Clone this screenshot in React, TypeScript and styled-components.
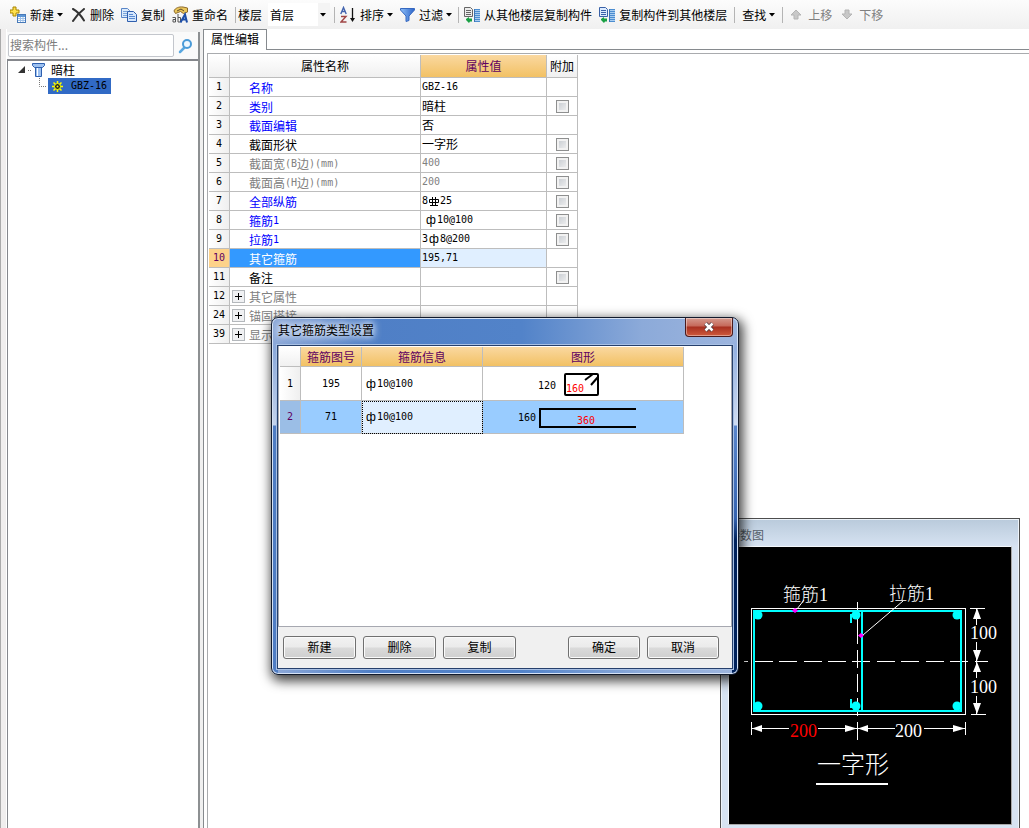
import React from "react";
import styled, { createGlobalStyle, css } from "styled-components";

const Global = createGlobalStyle`
  *, *::before, *::after { box-sizing: border-box; }
  html, body, #root { height: 100%; margin: 0; }
  body {
    font: 12px/16px "Noto Sans CJK SC", sans-serif;
    color: #000;
    background: #fff;
    overflow: hidden;
  }
  button, input, select { font: inherit; color: inherit; margin: 0; }
`;

const Latin = styled.span`
  font: 10px/10px "DejaVu Sans Mono", monospace;
`;

/* Chinese text with half-width Latin characters and digits */
function Mixed({ text }: { text: string }) {
  return (
    <>
      {text.split(/([\x20-\x7e]+)/).map((part, i) =>
        i % 2 ? <Latin key={i}>{part}</Latin> : part
      )}
    </>
  );
}

const Desktop = styled.div`
  position: relative;
  display: flex;
  flex-direction: column;
  height: 100vh;
  overflow: hidden;
`;

/* ---------- toolbar ---------- */

const Toolbar = styled.header`
  display: flex;
  align-items: center;
  flex: none;
  height: 29px;
  background: linear-gradient(#fcfcfc, #f0f0f0);
  white-space: nowrap;
`;

const Group = styled.div<{ $pad: number; $end: number; $first?: boolean }>`
  display: flex;
  align-items: center;
  gap: 7px;
  height: 16px;
  padding-left: ${(p) => p.$pad}px;
  margin-right: ${(p) => p.$end}px;
  border-left: ${(p) => (p.$first ? "0" : "1px solid #b4b4b4")};
`;

const ToolButton = styled.button`
  display: flex;
  align-items: center;
  gap: 4px;
  padding: 0;
  border: 0;
  background: none;
  line-height: 16px;
  &:disabled { color: #808080; }
  svg { flex: none; }
`;

const MenuLabel = styled.span`
  display: flex;
  align-items: center;
  gap: 3px;
`;

const FloorLabel = styled.label`
  display: flex;
  align-items: center;
  gap: 6px;
`;

const SelectBox = styled.span`
  display: flex;
  align-items: center;
  width: 62px;
  height: 23px;
  background: linear-gradient(90deg, #fff 50px, #f4f4f4 50px);
  svg { flex: none; margin-right: 4px; }
`;

const FloorSelect = styled.select`
  appearance: none;
  flex: 1;
  min-width: 0;
  padding: 0 2px;
  border: 0;
  background: transparent;
  line-height: 16px;
`;

const Caret = () => (
  <svg width="6" height="4" viewBox="0 0 6 4"><path d="M0 0h6L3 3.5z" fill="#000" /></svg>
);

const NewIcon = () => (
  <svg width="16" height="18" viewBox="0 0 16 18">
    <path d="M3 1h3v3h3v3H6v3H3V7H0V4h3z" fill="#ffe14d" stroke="#a88400" />
    <rect x="7.5" y="8.500" width="8" height="8" fill="#fff" stroke="#4779b8" />
    <path d="M8 9h7v2H8z" fill="#5e97d6" />
    <path d="M8 12.500h7M8 14.500h7M10.500 11v5M13 11v5" stroke="#9dc0e8" />
  </svg>
);
const DeleteIcon = () => (
  <svg width="16" height="14" viewBox="-2 0 16 14">
    <path d="M1 1C5 3 9 7.500 12 12.500M12 1C8 4 4 8 1 13" stroke="#333" strokeWidth="2" fill="none" strokeLinecap="round" />
  </svg>
);
const CopyIcon = () => (
  <svg width="16" height="16" viewBox="0 0 16 16">
    <path d="M.5 1.500h6l2 2v7h-8z" fill="#dcebfb" stroke="#5a86c8" />
    <path d="M2 4.500h4M2 6.500h4M2 8.500h4" stroke="#7ba5dc" />
    <path d="M6.500 4.500h6l3 3v7h-9z" fill="#d4e6fc" stroke="#2f5fae" />
    <path d="M8 7.500h4M8 9.500h6M8 11.500h6" stroke="#5a8ad0" />
  </svg>
);
const RenameIcon = () => (
  <svg width="16" height="18" viewBox="0 0 16 18">
    <path d="M2 5c1-3 5-4.500 9-4l4.500 1v4l-4 1.500-3-2-5 2z" fill="#eac65a" stroke="#8d6a2a" />
    <path d="M5 5l4-2 3 2" stroke="#5e4a2a" fill="none" />
    <path d="M.5 11.500h3v4.500H1v-2.500h2.500M6 8v8h2.500v-4.500H6" stroke="#555" fill="none" />
    <path d="M8.500 16.500L13 8.500l2 8M10 13.500h4" stroke="#1e4fa8" strokeWidth="2" fill="none" />
  </svg>
);
const SortIcon = () => (
  <svg width="16" height="18" viewBox="0 0 16 18">
    <path d="M.8 8L3.500 1.500 6.200 8M2 5.500h3" stroke="#4263ae" strokeWidth="1.400" fill="none" />
    <path d="M1 10.500h5L1 16h5.500" stroke="#a04545" strokeWidth="1.400" fill="none" />
    <path d="M12.500 2v12" stroke="#111" strokeWidth="1.300" />
    <path d="M10 12h5l-2.500 4z" fill="#111" />
  </svg>
);
const FilterIcon = () => (
  <svg width="15" height="14" viewBox="0 0 15 14">
    <defs>
      <linearGradient id="funnel"><stop stopColor="#8fc0f8" /><stop offset="1" stopColor="#2a62c8" /></linearGradient>
    </defs>
    <path d="M.5.5h14v1.500L9 8v4.500l-3 1V8L.5 2z" fill="url(#funnel)" stroke="#3668c0" />
  </svg>
);
const CopyFloorIcon = ({ page, edge }: { page: string; edge: string }) => (
  <svg width="16" height="18" viewBox="0 0 16 18">
    <path d="M.5 1.500h6l2 2v7h-8z" fill={page} stroke={edge} />
    <path d="M2 4.500h5M2 6.500h5M2 8.500h5" stroke={edge} />
    <path d="M2 13l3-2v1.500h3v3H6L5 17l-3-3z" fill="#18a043" />
    <path d="M10.500 3v13" stroke="#3c74b4" />
    <path d="M11 3.500h5M11 5.500h5M11 7.500h5M11 9.500h5M11 11.500h5M11 13.500h5M11 15.500h5" stroke="#4c8dd0" />
    <path d="M11 4.500h5M11 6.500h5M11 8.500h5M11 10.500h5M11 12.500h5M11 14.500h5" stroke="#a9cdf0" />
  </svg>
);
const MoveIcon = ({ down }: { down?: boolean }) => (
  <svg width="16" height="12" viewBox="0 0 16 12">
    <path d={down ? "M6 1h4v4h3L8 10 3 5h3z" : "M6 10h4V6h3L8 1 3 6h3z"} fill="#c8c8c8" stroke="#b4b4b4" />
  </svg>
);

/* ---------- main body ---------- */

const Body = styled.div`
  display: flex;
  flex: 1;
  min-height: 0;
  background: #f0f0f0;
`;

const Gutter = styled.div`
  width: 7px;
  border-left: 1px solid #aaa;
  border-right: 1px solid #fff;
  background: #f0eeee;
`;

const LeftPane = styled.aside`
  display: flex;
  flex-direction: column;
  width: 193px;
  margin-top: 3px;
  border-right: 2px solid #8d9092;
`;

const SearchRow = styled.form`
  display: flex;
  align-items: center;
  gap: 4px;
  height: 27px;
  padding-left: 1px;
  background: #fafafa;
`;

const SearchInput = styled.input`
  width: 166px;
  height: 23px;
  padding: 0 1px 2px;
  border: 1px solid #c3c6cc;
  border-radius: 2px;
  outline: 0;
  background: #fff;
  &::placeholder { color: #7c7c7c; opacity: 1; }
`;

const IconButton = styled.button`
  display: flex;
  padding: 0;
  border: 0;
  background: none;
`;

const Tree = styled.ul`
  flex: 1;
  margin: 0;
  padding: 1px 0 0;
  border-top: 2px solid #85878c;
  border-left: 1px solid #85878c;
  background: #fff;
  list-style: none;
  ul { margin: 0; padding: 0; list-style: none; }
`;

const TreeRow = styled.div<{ $indent: number; $gap: number }>`
  display: flex;
  align-items: center;
  height: 16px;
  padding-left: ${(p) => p.$indent}px;
  gap: ${(p) => p.$gap}px;
`;

const Selected = styled.span`
  display: flex;
  align-items: center;
  gap: 8px;
  height: 16px;
  padding: 0 4px;
  background: #316ac5;
`;

const RightPane = styled.main`
  display: flex;
  flex-direction: column;
  flex: 1;
  min-width: 0;
  margin-left: 3px;
  background: #fff;
`;

const TabBar = styled.div`
  display: flex;
  height: 21px;
  &::after { content: ""; flex: 1; border-bottom: 1px solid #868a8e; }
`;

const Tab = styled.button`
  width: 64px;
  padding: 0 0 2px;
  border: 1px solid #868a8e;
  border-bottom: 0;
  background: #fff;
`;

const TabPanel = styled.section`
  flex: 1;
  padding: 3px 0 0 3px;
  border-left: 1px solid #868a8e;
`;

const GridFrame = styled.div`
  height: 100%;
  padding: 1px 0 0 1px;
  border: solid #a9abae;
  border-width: 1px 0 0 1px;
`;

const PropTable = styled.table`
  width: 369px;
  border-collapse: separate;
  border-spacing: 0;
  table-layout: fixed;
`;

const line = "1px solid #bdbdbd";

const HeadCell = styled.th<{ $gold?: boolean; $width?: number; $height: number }>`
  width: ${(p) => (p.$width ? `${p.$width}px` : "auto")};
  height: ${(p) => p.$height}px;
  padding: 0;
  border-right: ${line};
  border-bottom: ${line};
  font-weight: 400;
  color: ${(p) => (p.$gold ? "#600060" : "#000")};
  background: ${(p) => (p.$gold ? "linear-gradient(#fad8a0, #f2c164)" : "linear-gradient(#fff, #f0f0f0)")};
`;

const IndexCell = styled.th<{ $active?: boolean; $blue?: boolean }>`
  padding: 0;
  border-right: ${line};
  border-bottom: ${line};
  font-weight: 400;
  background: linear-gradient(90deg, #fff, #efefef);
  ${(p) => p.$active && css`color: #600060; background: #fdd28a;`}
  ${(p) => p.$blue && css`color: #600060; background: #9bbee6;`}
`;

type Tone = "link" | "plain" | "muted" | "selected";
const tones: Record<Tone, string> = { link: "#0000ff", plain: "#000", muted: "#808080", selected: "#fff" };

const NameCell = styled.td<{ $tone: Tone; $group?: boolean }>`
  height: 19px;
  padding: 2px 0 0 ${(p) => (p.$group ? 2 : 19)}px;
  border-right: ${line};
  border-bottom: ${line};
  color: ${(p) => tones[p.$tone]};
  background: ${(p) => (p.$tone === "selected" ? "#3399ff" : "#fff")};
  white-space: nowrap;
`;

const ValueCell = styled.td<{ $tone: Tone; $inset: boolean }>`
  height: 19px;
  padding: 0 0 0 ${(p) => (p.$inset ? 4 : 1)}px;
  border-right: ${line};
  border-bottom: ${line};
  color: ${(p) => (p.$tone === "muted" ? "#808080" : "#000")};
  background: ${(p) => (p.$tone === "selected" ? "#e0efff" : "#fff")};
  white-space: nowrap;
`;

const CheckCell = styled.td`
  padding: 0;
  border-right: ${line};
  border-bottom: ${line};
  text-align: center;
`;

const Check = styled.input`
  appearance: none;
  display: block;
  width: 13px;
  height: 13px;
  margin: 1px auto 0;
  border: 1px solid #8e8f8f;
  background: linear-gradient(135deg, #c3c8ce, #f4f4f4);
  box-shadow: inset 0 0 0 2px #f2f2f2;
`;

const GroupName = styled.span`
  display: flex;
  align-items: center;
  gap: 4px;
  height: 16px;
`;

const Expander = styled.button`
  display: flex;
  padding: 1px;
  border: 1px solid #b4b8bc;
  background: #f0f1f3;
  margin-top: -2px;
`;

const ValueText = styled.span`
  display: flex;
  align-items: center;
  height: 16px;
`;

/* Steel-grade mark placed before a bar diameter, one full-width character */
const Grade = styled.span`
  display: flex;
  justify-content: center;
  width: 12px;
  font: 12px/12px "Liberation Sans", sans-serif;
`;

const Ribbed = () => (
  <svg width="12" height="11" viewBox="0 0 12 11" role="img" aria-label="HRB400">
    <path d="M1.500 3.500h9v3h-9zM4.500 1v8M7.500 1v8M2 9.500h8" fill="none" stroke="#000" />
  </svg>
);

const Value = ({ text }: { text: string }) => (
  <ValueText>
    {text.split(/([ф#])/).map((part, i) =>
      part === "ф" ? <Grade key={i}>ф</Grade>
      : part === "#" ? <Grade key={i}><Ribbed /></Grade>
      : <Mixed key={i} text={part} />
    )}
  </ValueText>
);

interface Row { n: number; name: string; tone: Tone; value?: string; check?: boolean; group?: boolean }
const rows: Row[] = [
  { n: 1, name: "名称", tone: "link", value: "GBZ-16" },
  { n: 2, name: "类别", tone: "link", value: "暗柱", check: true },
  { n: 3, name: "截面编辑", tone: "link", value: "否" },
  { n: 4, name: "截面形状", tone: "plain", value: "一字形", check: true },
  { n: 5, name: "截面宽(B边)(mm)", tone: "muted", value: "400", check: true },
  { n: 6, name: "截面高(H边)(mm)", tone: "muted", value: "200", check: true },
  { n: 7, name: "全部纵筋", tone: "link", value: "8#25", check: true },
  { n: 8, name: "箍筋1", tone: "link", value: "ф10@100", check: true },
  { n: 9, name: "拉筋1", tone: "link", value: "3ф8@200", check: true },
  { n: 10, name: "其它箍筋", tone: "selected", value: "195,71" },
  { n: 11, name: "备注", tone: "plain", check: true },
  { n: 12, name: "其它属性", tone: "muted", group: true },
  { n: 24, name: "锚固搭接", tone: "muted", group: true },
  { n: 39, name: "显示", tone: "muted", group: true },
];

/* ---------- parameter drawing window ---------- */

const DrawingWindow = styled.section`
  position: absolute;
  left: 720px;
  top: 518px;
  display: flex;
  flex-direction: column;
  width: 300px;
  padding: 0 7px 7px;
  border: 1px solid #4d4d4d;
  background: linear-gradient(#b9cadb, #d7e3f2 28px);
  box-shadow: inset 0 0 0 1px #eef4fa;
`;

const DrawingTitle = styled.h2`
  margin: 0;
  padding: 7px 0 3px;
  height: 27px;
  font: inherit;
  line-height: 18px;
  color: #55606a;
`;

const Canvas = styled.div`
  border: 1px solid #f4f8fc;
  border-right-color: #a8a8a8;
  border-bottom-color: #a8a8a8;
  background: #000;
  svg { display: block; }
`;

const Bar = ({ x, y }: { x: number; y: number }) => <circle cx={x} cy={y} r="4.500" fill="#0ff" />;

const SectionDrawing = () => (
  <svg width="282" height="277" viewBox="729 547 282 277" fontFamily='"Liberation Serif", "Noto Sans CJK SC", serif' fontWeight="300">
    <rect x="751.500" y="608.500" width="214" height="106" fill="none" stroke="#fff" />
    <path d="M744 661.500H988" stroke="#fff" strokeDasharray="4 7 18 6 18 7 18 6 18 6 18 7 18 6 18 7 18 6 18 7 18 6 18" />
    <path d="M857.500 602v42M857.500 650v18M857.500 674v18M857.500 698v18" stroke="#fff" />
    <path d="M754 611h207v100H754zM862 611v100" fill="none" stroke="#0ff" strokeWidth="2" />
    <path d="M851 623v-8h5M851 699v8h5" fill="none" stroke="#0ff" strokeWidth="2" />
    <Bar x={758} y={615} /><Bar x={856} y={615} /><Bar x={957} y={615} />
    <Bar x={758} y={706} /><Bar x={856} y={706} /><Bar x={957} y={706} />
    <path d="M804 600l-7 9M903 601l-40 34" stroke="#fff" />
    <path d="M795 608l3 2.500-3 2.500-3-2.500zM861 633l3 2.500-3 2.500-3-2.500z" fill="#f0f" />
    <path d="M970 608.500h15M971 714.500h15M976.500 609v16M976.500 642v36M976.500 696v18" stroke="#fff" />
    <path d="M977 608l4 11h-8zM977 661l4-11h-8zM977 662l4 10h-8zM977 714l4-11h-8z" fill="#fff" />
    <path d="M751.500 722v13M857.500 722v18M965.500 722v13M752 728.500h37M818 728.500h77M924 728.500h41" stroke="#fff" />
    <path d="M752 728.500l10-3.500v7zM857 728.500l-12-3.500v7zM858 728.500l10-3.500v7zM965 728.500l-12-3.500v7z" fill="#fff" />
    <g fill="#fff" fontSize="18">
      <text x="783" y="601">箍筋1</text>
      <text x="889" y="600">拉筋1</text>
      <text x="970" y="639">100</text>
      <text x="970" y="693">100</text>
      <text x="790" y="737" fill="#f00">200</text>
      <text x="895" y="737">200</text>
      <text x="817" y="773" fontSize="24">一字形</text>
    </g>
    <path d="M816 784h72" stroke="#fff" strokeWidth="2" />
  </svg>
);

/* ---------- stirrup dialog ---------- */

const Dialog = styled.section`
  position: absolute;
  left: 271px;
  top: 317px;
  display: flex;
  flex-direction: column;
  width: 468px;
  height: 358px;
  padding: 0 5px 5px;
  border: 1px solid #111a2c;
  border-radius: 7px;
  background:
    linear-gradient(transparent 20px, #8aa8da 30px, #c4d3ec 107px, #4f7dc4 108px) 0 0 / 6px 100% no-repeat,
    linear-gradient(transparent 20px, #93b0e0 30px, #cfdcf2 107px, #5a86cc 108px, #3563b0 200px, #00225c 222px) 100% 0 / 6px 100% no-repeat,
    linear-gradient(90deg, #8ea9d8, #4f7fc6 100px, #5283c9 250px, #8caad9 370px, #9db5de);
  box-shadow: inset 0 0 0 1px #d5e2f5, 2px 4px 12px 2px rgba(0, 0, 0, 0.75);
`;

const TitleBar = styled.header`
  display: flex;
  align-items: flex-start;
  justify-content: space-between;
  height: 27px;
`;

const DialogTitle = styled.h1`
  margin: 4px 0 0 1px;
  font: inherit;
  line-height: 16px;
  text-shadow: 0 0 6px #fff, 0 0 10px #dce8f8, 0 0 10px #dce8f8;
`;

const CloseButton = styled.button`
  display: flex;
  align-items: center;
  justify-content: center;
  width: 48px;
  height: 19px;
  padding: 0 0 1px;
  border: 1px solid #4a1a1c;
  border-top: 0;
  border-radius: 0 0 4px 4px;
  background: linear-gradient(#d59a8e, #c6695a 8px, #a83020 9px, #cf5a3c);
  box-shadow: inset 0 0 0 1px rgba(255, 255, 255, 0.4);
`;

const DialogBody = styled.div`
  display: flex;
  flex-direction: column;
  flex: 1;
  border: 1px solid #26406c;
  background: #f0f0f0;
  box-shadow: 0 0 0 1px #a8c0e4;
`;

const ListArea = styled.div`
  flex: 1;
  padding: 1px;
  border: solid #a6a8b0;
  border-width: 0 1px 1px;
  background: #fff;
`;

const StirrupTable = styled.table`
  width: 404px;
  border-collapse: separate;
  border-spacing: 0;
  table-layout: fixed;
`;

const StirrupCell = styled.td<{ $blue?: boolean; $align: "center" | "left"; $focus?: boolean }>`
  padding: 0 ${(p) => (p.$align === "left" ? 3 : 0)}px;
  border-right: ${line};
  border-bottom: ${line};
  text-align: ${(p) => p.$align};
  background: ${(p) => (p.$focus ? "#e0efff" : p.$blue ? "#99ccff" : "#fff")};
  ${(p) => p.$focus && css`outline: 1px dotted #000; outline-offset: -1px;`}
  & > svg { display: block; }
`;

const Footer = styled.footer`
  display: flex;
  align-items: center;
  justify-content: space-between;
  height: 41px;
  padding: 0 13px 0 5px;
`;

const ButtonSet = styled.div`
  display: flex;
  gap: 7px;
`;

const PushButton = styled.button<{ $width?: number }>`
  width: ${(p) => p.$width ?? 73}px;
  height: 23px;
  padding: 0 0 1px;
  border: 1px solid #707070;
  border-radius: 3px;
  background: linear-gradient(#f2f2f2, #ebebeb 10px, #dadada 11px, #cfcfcf);
  box-shadow: inset 0 0 0 1px #fafafa;
`;

const ClosedStirrup = () => (
  <svg width="200" height="33" viewBox="483 367 200 33" fontFamily='"DejaVu Sans Mono", monospace' fontSize="10">
    <text x="538" y="389">120</text>
    <rect x="565" y="374" width="33" height="21" rx="1" fill="none" stroke="#000" strokeWidth="2" />
    <path d="M593 374l-8 6M598 377l-7 8" stroke="#000" strokeWidth="2" />
    <text x="566" y="392" fill="#f00">160</text>
  </svg>
);
const OpenStirrup = () => (
  <svg width="200" height="32" viewBox="483 401 200 32" fontFamily='"DejaVu Sans Mono", monospace' fontSize="10">
    <text x="518" y="421">160</text>
    <path d="M636 409h-96v18h96" fill="none" stroke="#000" strokeWidth="2" />
    <text x="577" y="424" fill="#f00">360</text>
  </svg>
);

export default function App() {
  return (
    <Desktop>
      <Global />
      <Toolbar>
        <Group $first $pad={10} $end={7}>
          <ToolButton><NewIcon /><MenuLabel>新建<Caret /></MenuLabel></ToolButton>
          <ToolButton><DeleteIcon />删除</ToolButton>
          <ToolButton><CopyIcon />复制</ToolButton>
          <ToolButton><RenameIcon />重命名</ToolButton>
        </Group>
        <Group $pad={2} $end={4}>
          <FloorLabel>
            楼层
            <SelectBox>
              <FloorSelect defaultValue="首层"><option>首层</option></FloorSelect>
              <Caret />
            </SelectBox>
          </FloorLabel>
        </Group>
        <Group $pad={5} $end={6}>
          <ToolButton><SortIcon /><MenuLabel>排序<Caret /></MenuLabel></ToolButton>
          <ToolButton><FilterIcon /><MenuLabel>过滤<Caret /></MenuLabel></ToolButton>
        </Group>
        <Group $pad={5} $end={7}>
          <ToolButton><CopyFloorIcon page="#ececec" edge="#666" />从其他楼层复制构件</ToolButton>
          <ToolButton><CopyFloorIcon page="#dcebff" edge="#3a62a8" />复制构件到其他楼层</ToolButton>
        </Group>
        <Group $pad={7} $end={7}>
          <ToolButton><MenuLabel>查找<Caret /></MenuLabel></ToolButton>
        </Group>
        <Group $pad={5} $end={0}>
          <ToolButton disabled><MoveIcon />上移</ToolButton>
          <ToolButton disabled><MoveIcon down />下移</ToolButton>
        </Group>
      </Toolbar>

      <Body>
        <Gutter />
        <LeftPane>
          <SearchRow>
            <SearchInput aria-label="搜索构件" placeholder="搜索构件..." />
            <IconButton type="button" aria-label="搜索">
              <svg width="16" height="16" viewBox="0 0 16 16">
                <path d="M6.500 9.500L2 14" stroke="#5aa8e0" strokeWidth="2.500" strokeLinecap="round" />
                <circle cx="9" cy="6" r="4" fill="#eef8ff" stroke="#4a9bd8" strokeWidth="2" />
              </svg>
            </IconButton>
          </SearchRow>
          <Tree>
            <li>
              <TreeRow $indent={9} $gap={6}>
                <svg width="28" height="16" viewBox="17 61 28 16">
                  <path d="M25 65v7h-7z" fill="#333" />
                  <path d="M28 69.500h4" stroke="#777" strokeDasharray="1 1" />
                  <path d="M32.500 62.500h12v2l-2 2h-8l-2-2zM35.500 66.500h6v9h-6z" fill="#9cc0f0" stroke="#2d5fae" />
                  <path d="M37.500 67v8" stroke="#fff" />
                </svg>
                暗柱
              </TreeRow>
              <ul>
                <li>
                  <TreeRow $indent={30} $gap={2}>
                    <svg width="8" height="16" viewBox="38 77 8 16">
                      <path d="M39.500 77v8.500H46" fill="none" stroke="#777" strokeDasharray="1 1" />
                    </svg>
                    <Selected>
                      <svg width="11" height="11" viewBox="0 0 11 11">
                        <path d="M5.500 0v11M0 5.500h11M1.500 1.500l8 8M9.500 1.500l-8 8" stroke="#ff0" strokeWidth="1.500" />
                        <circle cx="5.500" cy="5.500" r="3" fill="#222" stroke="#ff0" />
                        <circle cx="5.500" cy="5.500" r="1" fill="#ff0" />
                      </svg>
                      <Latin>GBZ-16</Latin>
                    </Selected>
                  </TreeRow>
                </li>
              </ul>
            </li>
          </Tree>
        </LeftPane>

        <RightPane>
          <TabBar><Tab>属性编辑</Tab></TabBar>
          <TabPanel>
            <GridFrame>
              <PropTable>
                <thead>
                  <tr>
                    <HeadCell $width={21} $height={23} />
                    <HeadCell $width={191} $height={23}>属性名称</HeadCell>
                    <HeadCell $width={126} $height={23} $gold>属性值</HeadCell>
                    <HeadCell $width={31} $height={23}>附加</HeadCell>
                  </tr>
                </thead>
                <tbody>
                  {rows.map((r) => (
                    <tr key={r.n}>
                      <IndexCell $active={r.tone === "selected"}><ValueTextCentered>{r.n}</ValueTextCentered></IndexCell>
                      <NameCell $tone={r.tone} $group={r.group}>
                        {r.group ? (
                          <GroupName>
                            <Expander aria-label={`展开${r.name}`}>
                              <svg width="9" height="9" viewBox="0 0 9 9"><path d="M1 4.500h7M4.500 1v7" stroke="#000" /></svg>
                            </Expander>
                            {r.name}
                          </GroupName>
                        ) : <ValueText><Mixed text={r.name} /></ValueText>}
                      </NameCell>
                      <ValueCell $tone={r.tone} $inset={r.n === 8}>{r.value && <Value text={r.value} />}</ValueCell>
                      <CheckCell>{r.check && <Check type="checkbox" aria-label={`${r.name} 附加`} />}</CheckCell>
                    </tr>
                  ))}
                </tbody>
              </PropTable>
            </GridFrame>
          </TabPanel>
        </RightPane>
      </Body>

      <DrawingWindow>
        <DrawingTitle>参数图</DrawingTitle>
        <Canvas><SectionDrawing /></Canvas>
      </DrawingWindow>

      <Dialog role="dialog" aria-labelledby="dialog-title">
        <TitleBar>
          <DialogTitle id="dialog-title">其它箍筋类型设置</DialogTitle>
          <CloseButton aria-label="关闭">
            <svg width="12" height="10" viewBox="0 0 12 10">
              <path d="M2.500 1.500l7 7M9.500 1.500l-7 7" stroke="#4a3a40" strokeWidth="4" />
              <path d="M2.500 1.500l7 7M9.500 1.500l-7 7" stroke="#fff" strokeWidth="2.500" />
            </svg>
          </CloseButton>
        </TitleBar>
        <DialogBody>
          <ListArea>
            <StirrupTable>
              <thead>
                <tr>
                  <HeadCell $width={21} $height={20} />
                  <HeadCell $width={61} $height={20} $gold>箍筋图号</HeadCell>
                  <HeadCell $width={121} $height={20} $gold>箍筋信息</HeadCell>
                  <HeadCell $width={201} $height={20} $gold>图形</HeadCell>
                </tr>
              </thead>
              <tbody>
                <tr>
                  <IndexCell><ValueTextCentered>1</ValueTextCentered></IndexCell>
                  <StirrupCell $align="center"><ValueTextCentered>195</ValueTextCentered></StirrupCell>
                  <StirrupCell $align="left"><Value text="ф10@100" /></StirrupCell>
                  <StirrupCell $align="center"><ClosedStirrup /></StirrupCell>
                </tr>
                <tr>
                  <IndexCell $blue><ValueTextCentered>2</ValueTextCentered></IndexCell>
                  <StirrupCell $align="center" $blue><ValueTextCentered>71</ValueTextCentered></StirrupCell>
                  <StirrupCell $align="left" $focus><Value text="ф10@100" /></StirrupCell>
                  <StirrupCell $align="center" $blue><OpenStirrup /></StirrupCell>
                </tr>
              </tbody>
            </StirrupTable>
          </ListArea>
          <Footer>
            <ButtonSet>
              <PushButton>新建</PushButton>
              <PushButton>删除</PushButton>
              <PushButton>复制</PushButton>
            </ButtonSet>
            <ButtonSet>
              <PushButton $width={72}>确定</PushButton>
              <PushButton $width={72}>取消</PushButton>
            </ButtonSet>
          </Footer>
        </DialogBody>
      </Dialog>
    </Desktop>
  );
}

const ValueTextCentered = styled(Latin)`
  display: block;
  text-align: center;
`;
